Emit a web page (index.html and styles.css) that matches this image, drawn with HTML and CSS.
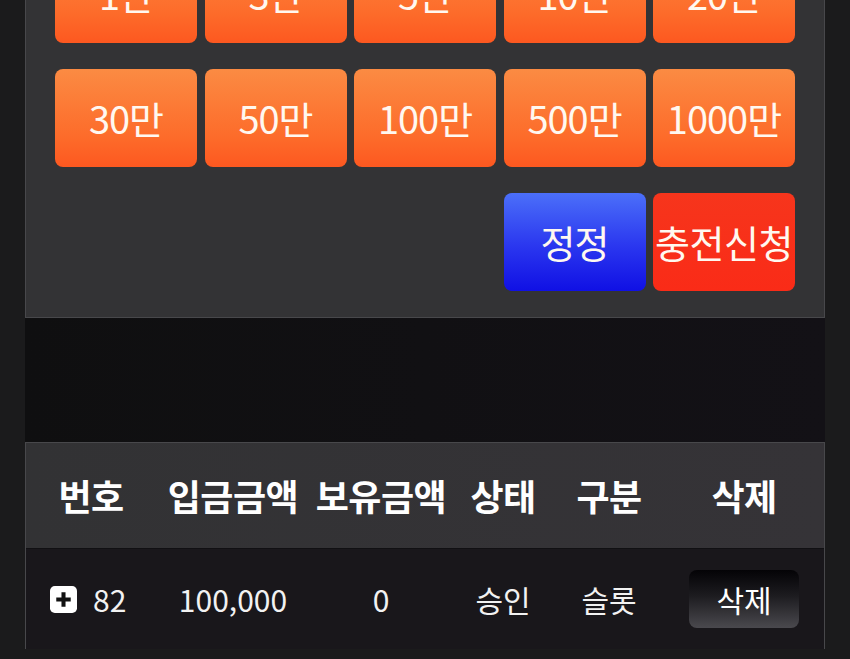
FILE: index.html
```html
<!DOCTYPE html>
<html lang="ko">
<head>
  <meta charset="UTF-8">
  <meta name="viewport" content="width=device-width, initial-scale=1.0">
  <title>충전신청</title>
  <link rel="stylesheet" href="styles.css">
</head>
<body>
  <div class="wrap">
    <!-- 금액 선택 -->
    <div class="charge-box">
      <div class="amount-grid">
        <button class="btn btn-amount">1만</button>
        <button class="btn btn-amount">3만</button>
        <button class="btn btn-amount">5만</button>
        <button class="btn btn-amount">10만</button>
        <button class="btn btn-amount">20만</button>
        <button class="btn btn-amount">30만</button>
        <button class="btn btn-amount">50만</button>
        <button class="btn btn-amount">100만</button>
        <button class="btn btn-amount">500만</button>
        <button class="btn btn-amount">1000만</button>
        <button class="btn btn-reset">정정</button>
        <button class="btn btn-submit">충전신청</button>
      </div>
    </div>

    <!-- 충전 내역 -->
    <div class="history">
      <div class="history-row history-head">
        <div>번호</div>
        <div>입금금액</div>
        <div>보유금액</div>
        <div>상태</div>
        <div>구분</div>
        <div>삭제</div>
      </div>
      <div class="history-row history-item">
        <div class="no">
          <span class="expand">
            <svg viewBox="0 0 28 28" width="27" height="27">
              <rect x="0" y="0" width="28" height="28" rx="5" fill="#fff"/>
              <path d="M14 6.5v15M6.5 14h15" stroke="#111" stroke-width="4.2"/>
            </svg>
          </span>
          <span>82</span>
        </div>
        <div>100,000</div>
        <div>0</div>
        <div>승인</div>
        <div>슬롯</div>
        <div><button class="btn-delete">삭제</button></div>
      </div>
    </div>
  </div>
</body>
</html>
```

FILE: styles.css
```css
body {
  margin: 0;
  padding: 0;
  background-color: #1b1b1c;
  font-family: 'Noto Sans CJK KR', 'Noto Sans', sans-serif;
  color: #fff;
  overflow: hidden;
}
.wrap {
  margin: 0 25px;
  min-height: 100vh;
  background: linear-gradient(90deg, #0f0f10, #131116);
}
.charge-box {
  margin-top: -82px;
  padding: 27px 29px 26px;
  background-color: #333335;
  border: 1px solid #48484b;
  border-top: none;
}
.amount-grid {
  display: grid;
  grid-template-columns: repeat(5, 1fr);
  column-gap: 7.5px;
  row-gap: 26.5px;
}
.btn {
  height: 97.5px;
  border: none;
  border-radius: 8px;
  color: #fff8f0;
  font-family: inherit;
  font-size: 38px;
  padding: 0;
  letter-spacing: -1px;
  cursor: pointer;
  white-space: nowrap;
}
.btn-amount {
  background: linear-gradient(180deg, #fb8b43 0%, #fd6b2a 70%, #fd5820 100%);
}
.btn-reset {
  grid-column: 4;
  background: linear-gradient(180deg, #4b6ff9 0%, #2a36ef 55%, #1010e4 100%);
}
.btn-submit {
  grid-column: 5;
  letter-spacing: -0.5px;
  background: linear-gradient(180deg, #f6351c, #fa2b17);
}
.history {
  margin-top: 124px;
  border: 1px solid #48484b;
  border-bottom: none;
  background-color: #19171b;
}
.history-row {
  display: grid;
  grid-template-columns: 130px 154px 142px 102px 110px 1fr;
  align-items: center;
  text-align: center;
}
.history-head {
  height: 105px;
  background: linear-gradient(90deg, #323234, #353337);
  border-bottom: 1px solid #111013;
  font-size: 36px;
  font-weight: 700;
  letter-spacing: -0.5px;
}
.history-item {
  height: 100px;
  font-size: 30px;
  color: #f2f2f2;
}
.history-item .no {
  display: flex;
  align-items: center;
  justify-content: flex-start;
  gap: 16px;
  padding-left: 24px;
}
.expand {
  display: flex;
  padding-top: 2px;
}
.btn-delete {
  width: 110px;
  height: 58px;
  border: none;
  border-radius: 8px;
  background: linear-gradient(180deg, #040306 0%, #1d1c20 45%, #4a494e 100%);
  color: #fff;
  font-family: inherit;
  font-size: 30px;
  cursor: pointer;
}
```
